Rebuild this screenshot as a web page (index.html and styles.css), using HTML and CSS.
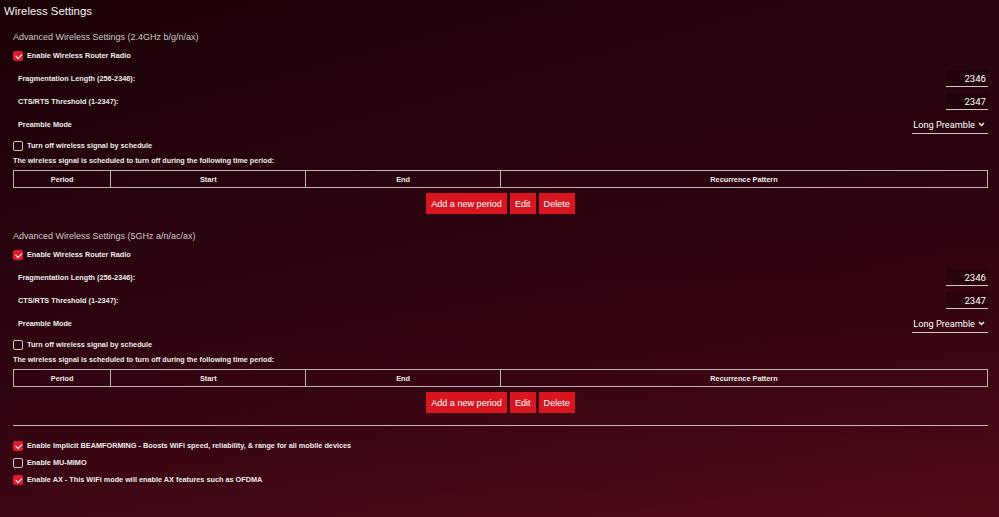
FILE: index.html
```html
<!DOCTYPE html>
<html lang="en">
<head>
  <meta charset="UTF-8">
  <meta name="viewport" content="width=device-width, initial-scale=1.0">
  <title>Wireless Settings</title>
  <link rel="stylesheet" href="styles.css">
</head>
<body>
  <h1 class="title">Wireless Settings</h1>

  <div class="section">
    <h2>Advanced Wireless Settings (2.4GHz b/g/n/ax)</h2>
    <div class="check-row"><span class="box checked"></span>Enable Wireless Router Radio</div>
    <div class="field-row">
      <span class="field-name">Fragmentation Length (256-2346):</span>
      <span class="num-input">2346</span>
    </div>
    <div class="field-row">
      <span class="field-name">CTS/RTS Threshold (1-2347):</span>
      <span class="num-input">2347</span>
    </div>
    <div class="field-row">
      <span class="field-name">Preamble Mode</span>
      <span class="select">Long Preamble
        <svg width="7" height="5" viewBox="0 0 7 5"><path d="M1 1l2.5 2.5L6 1" fill="none" stroke="#fff" stroke-width="1.3"/></svg>
      </span>
    </div>
    <div class="check-row schedule"><span class="box"></span>Turn off wireless signal by schedule</div>
    <div class="note">The wireless signal is scheduled to turn off during the following time period:</div>
    <table class="periods">
      <thead>
        <tr>
          <th class="c-period">Period</th>
          <th class="c-start">Start</th>
          <th class="c-end">End</th>
          <th>Recurrence Pattern</th>
        </tr>
      </thead>
    </table>
    <div class="actions">
      <button>Add a new period</button>
      <button>Edit</button>
      <button>Delete</button>
    </div>
  </div>

  <div class="section">
    <h2>Advanced Wireless Settings (5GHz a/n/ac/ax)</h2>
    <div class="check-row"><span class="box checked"></span>Enable Wireless Router Radio</div>
    <div class="field-row">
      <span class="field-name">Fragmentation Length (256-2346):</span>
      <span class="num-input">2346</span>
    </div>
    <div class="field-row">
      <span class="field-name">CTS/RTS Threshold (1-2347):</span>
      <span class="num-input">2347</span>
    </div>
    <div class="field-row">
      <span class="field-name">Preamble Mode</span>
      <span class="select">Long Preamble
        <svg width="7" height="5" viewBox="0 0 7 5"><path d="M1 1l2.5 2.5L6 1" fill="none" stroke="#fff" stroke-width="1.3"/></svg>
      </span>
    </div>
    <div class="check-row schedule"><span class="box"></span>Turn off wireless signal by schedule</div>
    <div class="note">The wireless signal is scheduled to turn off during the following time period:</div>
    <table class="periods">
      <thead>
        <tr>
          <th class="c-period">Period</th>
          <th class="c-start">Start</th>
          <th class="c-end">End</th>
          <th>Recurrence Pattern</th>
        </tr>
      </thead>
    </table>
    <div class="actions">
      <button>Add a new period</button>
      <button>Edit</button>
      <button>Delete</button>
    </div>
  </div>

  <div class="extras">
    <div class="check-row small"><span class="box checked"></span>Enable Implicit BEAMFORMING - Boosts WiFi speed, reliability, &amp; range for all mobile devices</div>
    <div class="check-row small"><span class="box"></span>Enable MU-MIMO</div>
    <div class="check-row small"><span class="box checked"></span>Enable AX - This WiFi mode will enable AX features such as OFDMA</div>
  </div>
</body>
</html>
```

FILE: styles.css
```css
html, body {
  height: 100%;
}
body {
  margin: 0;
  font-family: "Liberation Sans", Arial, sans-serif;
  color: #ececec;
  background: linear-gradient(165deg, #1a0206 0%, #2a0410 35%, #44061320 100%), linear-gradient(180deg, #1c0207 0%, #3a0511 50%, #560a18 100%);
  background-color: #2a0410;
  overflow: hidden;
}
.title {
  margin: 0;
  padding-left: 4px;
  height: 22px;
  line-height: 22px;
  font-size: 11.4px;
  font-weight: normal;
  color: #f2f2f2;
}
.section {
  margin: 8px 11px 0 13px;
}
.section + .section {
  margin-top: 15px;
}
h2 {
  margin: 0;
  height: 14px;
  line-height: 14px;
  font-size: 9px;
  font-weight: normal;
  color: #cbc6c8;
}
.check-row {
  display: flex;
  align-items: center;
  height: 23px;
  font-size: 7.3px;
  font-weight: bold;
}
.check-row.schedule {
  height: 19px;
}
.check-row.small {
  height: 17px;
}
.box {
  box-sizing: border-box;
  width: 10px;
  height: 10px;
  margin-right: 4px;
  border: 1px solid #c8c8c8;
  border-radius: 2px;
  position: relative;
  flex-shrink: 0;
}
.box.checked {
  background: #e0192d;
  border-color: #e0192d;
}
.box.checked::after {
  content: "";
  position: absolute;
  left: 2px;
  top: 2px;
  width: 5px;
  height: 2.5px;
  border-left: 1px solid #fff;
  border-bottom: 1px solid #fff;
  transform: rotate(-45deg);
  transform-origin: 40% 60%;
}
.field-row {
  display: flex;
  align-items: center;
  justify-content: space-between;
  height: 23px;
  padding-left: 5px;
}
.field-name {
  font-size: 7.3px;
  font-weight: bold;
}
.num-input {
  box-sizing: border-box;
  width: 42px;
  height: 17px;
  line-height: 17px;
  padding-right: 2px;
  text-align: right;
  font-family: Roboto, sans-serif;
  font-size: 9.6px;
  color: #fff;
  background: rgba(0, 0, 0, 0.18);
  border-bottom: 1px solid #cfc8ca;
}
.select {
  box-sizing: border-box;
  display: flex;
  align-items: center;
  justify-content: flex-end;
  gap: 3px;
  width: 76px;
  height: 18px;
  padding-right: 3px;
  white-space: nowrap;
  font-family: Roboto, sans-serif;
  font-size: 9.2px;
  color: #fff;
  border-bottom: 1px solid #cfc8ca;
}
.note {
  height: 11px;
  line-height: 11px;
  font-size: 7.2px;
  font-weight: bold;
}
.periods {
  width: 100%;
  margin-top: 4px;
  border-collapse: collapse;
}
.periods th {
  height: 16px;
  padding: 0;
  border: 1px solid #bdb3b5;
  font-size: 7.3px;
  font-weight: bold;
  color: #ececec;
  text-align: center;
}
.c-period {
  width: 10%;
}
.c-start, .c-end {
  width: 20%;
}
.actions {
  display: flex;
  justify-content: center;
  gap: 3px;
  margin-top: 5px;
}
button {
  height: 21px;
  padding: 0 5px;
  border: none;
  background: #d9161f;
  color: #fff;
  font-family: "Liberation Sans", Arial, sans-serif;
  font-size: 9.1px;
}
.extras {
  margin: 12px 11px 0 13px;
  padding-top: 11px;
  border-top: 1px solid #c4babc;
}
```
